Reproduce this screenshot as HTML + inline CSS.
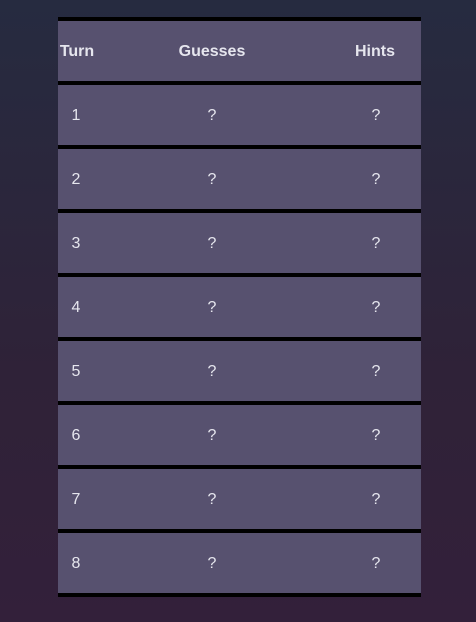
<!DOCTYPE html>
<html><head><style>
html,body{margin:0;padding:0;}
body{width:476px;height:622px;background:linear-gradient(#262b40,#2f2238 60%,#33203a);font-family:"Liberation Sans",sans-serif;position:relative;overflow:hidden;}
.t{position:absolute;left:58px;top:17px;width:363px;}
.r{height:60px;border-top:4px solid #000;background:#57516f;position:relative;color:#e6e6ee;font-size:16px;}
.r:last-child{border-bottom:4px solid #000;}
.r span{position:absolute;top:31px;transform:translate(-50%,-50%);}
.h span{font-weight:bold;}
</style></head><body>
<div class="t">
<div class="r h"><span style="left:19px">Turn</span><span style="left:154px">Guesses</span><span style="left:317px">Hints</span></div>
<div class="r"><span style="left:18px">1</span><span style="left:154px">?</span><span style="left:318px">?</span></div>
<div class="r"><span style="left:18px">2</span><span style="left:154px">?</span><span style="left:318px">?</span></div>
<div class="r"><span style="left:18px">3</span><span style="left:154px">?</span><span style="left:318px">?</span></div>
<div class="r"><span style="left:18px">4</span><span style="left:154px">?</span><span style="left:318px">?</span></div>
<div class="r"><span style="left:18px">5</span><span style="left:154px">?</span><span style="left:318px">?</span></div>
<div class="r"><span style="left:18px">6</span><span style="left:154px">?</span><span style="left:318px">?</span></div>
<div class="r"><span style="left:18px">7</span><span style="left:154px">?</span><span style="left:318px">?</span></div>
<div class="r"><span style="left:18px">8</span><span style="left:154px">?</span><span style="left:318px">?</span></div>
</div>
</body></html>
